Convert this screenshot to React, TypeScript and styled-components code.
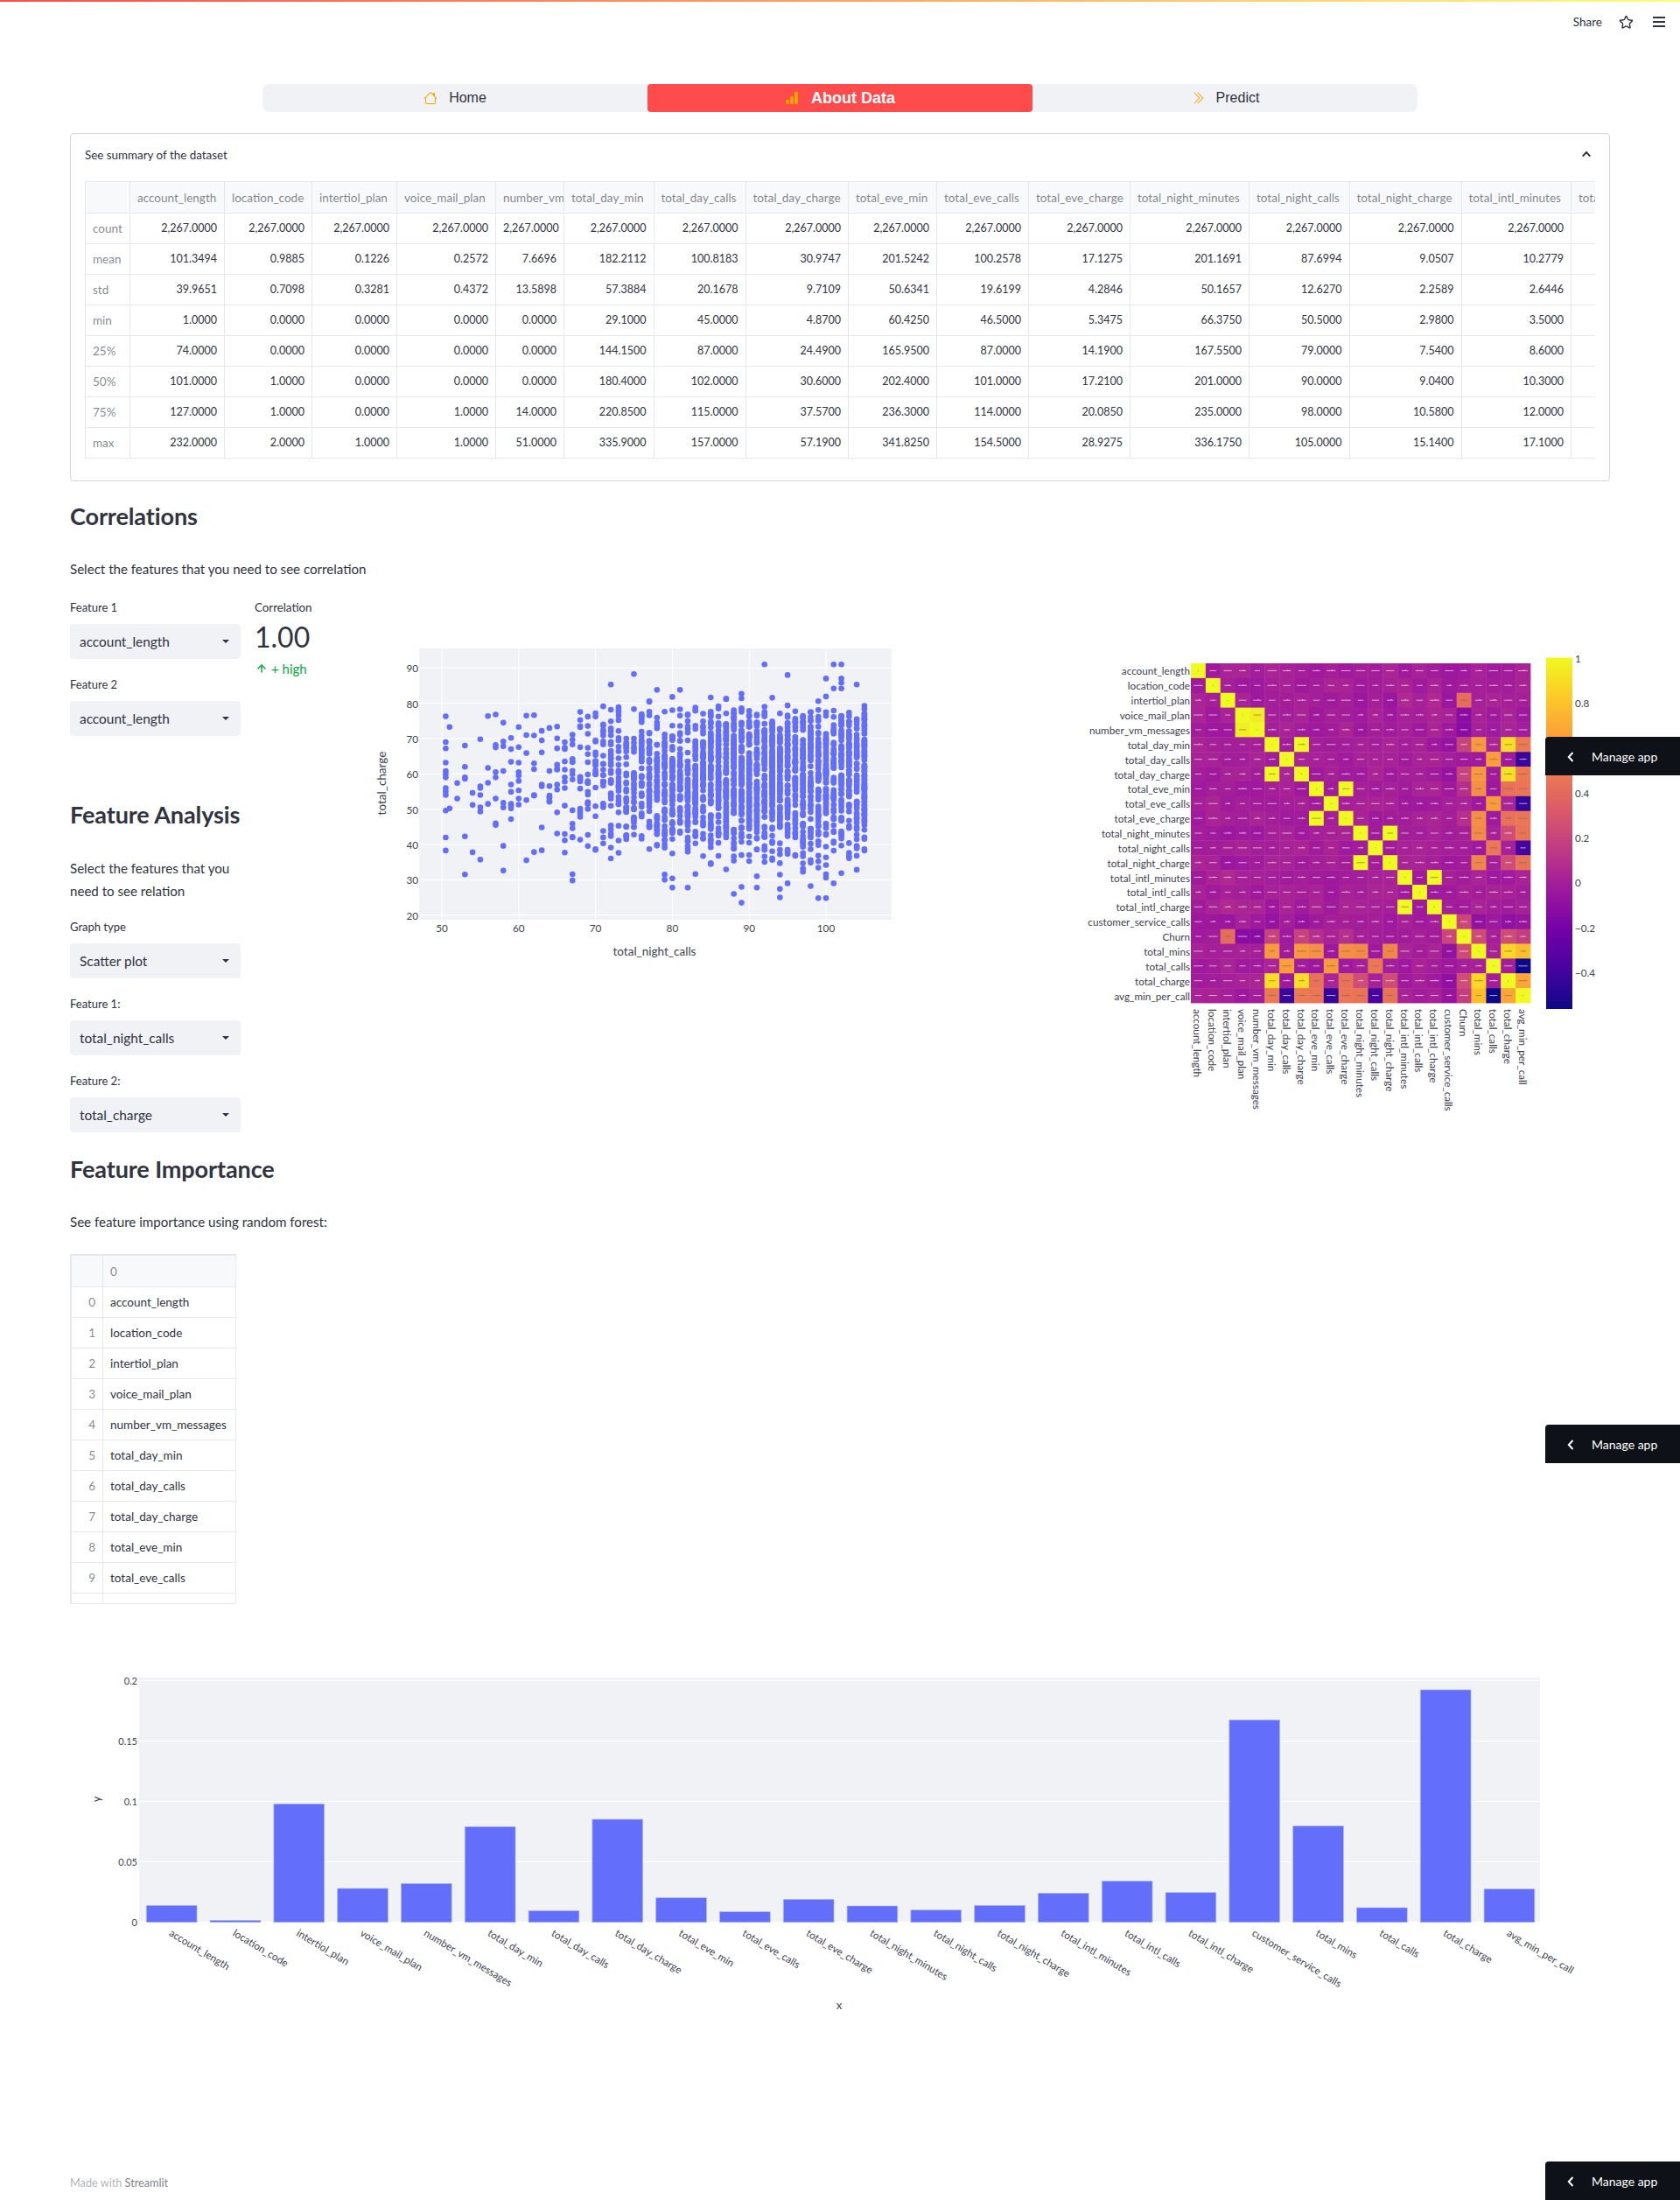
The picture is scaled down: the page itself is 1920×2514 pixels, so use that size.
import React from "react";
import styled, { createGlobalStyle } from "styled-components";
import { BsHouse, BsBarChartFill, BsChevronDoubleRight } from "react-icons/bs";
import { ArrowUp, Star } from "lucide-react";

const GlobalStyle = createGlobalStyle`
  html, body { margin: 0; padding: 0; background: #fff; }
  body { font-family: Lato, "Noto Sans", sans-serif; color: #31333f; }
  * { box-sizing: border-box; }
`;

const Page = styled.div`
  position: relative;
  width: 1920px;
  height: 2514px;
  overflow: hidden;
  background: #fff;
`;
const Decoration = styled.div`
  height: 2px;
  background: linear-gradient(90deg, #ff4b4b, #fffd80);
`;
const Header = styled.header`
  height: 46px;
  display: flex;
  align-items: center;
  justify-content: flex-end;
  padding-right: 15px;
`;
const ShareLabel = styled.span`
  font-size: 13.5px;
  margin-right: 19px;
`;
const StarButton = styled.span`
  display: flex;
  margin-right: 20px;
  color: #31333f;
`;
const Main = styled.main`
  padding: 0 80px;
`;
const Nav = styled.nav`
  display: flex;
  width: 1320px;
  height: 32px;
  margin: 48px 0 0 220px;
  background: #f0f2f6;
  border-radius: 8px;
`;
const NavItem = styled.div<{ $active?: boolean }>`
  flex: 1;
  display: flex;
  align-items: center;
  justify-content: center;
  gap: ${(p) => (p.$active ? 14 : 13)}px;
  border-radius: 4px;
  font-family: "Liberation Sans", Arial, sans-serif;
  font-size: ${(p) => (p.$active ? 18 : 16)}px;
  font-weight: ${(p) => (p.$active ? 700 : 400)};
  background: ${(p) => (p.$active ? "#ff4b4b" : "transparent")};
  color: ${(p) => (p.$active ? "#fff" : "#31333f")};
  svg { color: #ffa500; }
`;
const Expander = styled.section`
  margin-top: 24px;
  border: 1px solid #d6d6d9;
  border-radius: 4px;
  padding-bottom: 25px;
`;
const ExpanderHeader = styled.div`
  height: 54px;
  display: flex;
  justify-content: space-between;
  padding: 14px 21px 0 16px;
  line-height: 20px;
  font-size: 13.4px;
  svg { margin-top: -1px; }
`;
const TableClip = styled.div`
  width: 1726px;
  margin-left: 16px;
  overflow: hidden;
`;
const DataTable = styled.table<{ $w: number }>`
  table-layout: fixed;
  width: ${(p) => p.$w}px;
  border-collapse: collapse;
  font-size: 12.5px;
`;
const Col = styled.col<{ $w: number }>`
  width: ${(p) => p.$w}px;
`;
const HeadCell = styled.th`
  height: 36px;
  padding: 0 8px;
  border: 1px solid #e6e8ec;
  background: #f8f9fb;
  color: rgba(49, 51, 63, 0.6);
  font-size: 13.5px;
  font-weight: 400;
  text-align: left;
  white-space: nowrap;
  overflow: hidden;
`;
const IndexCell = styled.th<{ $align?: string }>`
  height: 35px;
  padding: 0 8px 1px;
  border: 1px solid #e6e8ec;
  color: rgba(49, 51, 63, 0.6);
  font-size: 13.5px;
  font-weight: 400;
  text-align: ${(p) => p.$align || "left"};
`;
const ValueCell = styled.td`
  height: 35px;
  padding: 0 8px 1px;
  border: 1px solid #e6e8ec;
  text-align: right;
  white-space: nowrap;
  overflow: hidden;
`;
const LabelCell = styled(ValueCell)`
  font-size: 13.5px;
  text-align: left;
`;
const SectionTitle = styled.h2<{ $top: number }>`
  margin: ${(p) => p.$top}px 0 0;
  height: 40px;
  line-height: 40px;
  font-size: 27px;
  font-weight: 700;
  letter-spacing: -0.1px;
`;
const Paragraph = styled.p<{ $top: number; $w?: number }>`
  margin: ${(p) => p.$top}px 0 0;
  width: ${(p) => (p.$w ? p.$w + "px" : "auto")};
  font-size: 15.1px;
  line-height: 26px;
`;
const AnalysisRow = styled.div`
  display: flex;
  align-items: flex-start;
  margin-top: 20px;
`;
const LeftColumn = styled.div`
  width: 340px;
  flex: none;
`;
const FieldsAndMetric = styled.div`
  display: flex;
  gap: 16px;
`;
const FieldStack = styled.div<{ $top?: number }>`
  width: 195px;
  margin-top: ${(p) => p.$top || 0}px;
  display: flex;
  flex-direction: column;
  gap: 18px;
`;
const Field = styled.div``;
const FieldLabel = styled.div`
  height: 30px;
  line-height: 23px;
  font-size: 13px;
`;
const Select = styled.div`
  height: 40px;
  display: flex;
  align-items: center;
  justify-content: space-between;
  padding: 0 13px 0 11px;
  background: #f0f2f6;
  border-radius: 4px;
  font-size: 15.4px;
`;
const Caret = styled.span`
  width: 0;
  height: 0;
  border-left: 4px solid transparent;
  border-right: 4px solid transparent;
  border-top: 4.5px solid #31333f;
`;
const Metric = styled.div``;
const MetricLabel = styled.div`
  height: 23px;
  line-height: 23px;
  font-size: 13.3px;
`;
const MetricValue = styled.div`
  height: 46px;
  margin-top: -1px;
  line-height: 46px;
  font-size: 32px;
`;
const MetricDelta = styled.div`
  display: flex;
  align-items: center;
  gap: 4px;
  height: 26px;
  font-size: 15px;
  color: #09ab3b;
  svg { margin-left: 1px; }
`;
const ScatterSvg = styled.svg`
  flex: none;
  display: block;
  margin-top: 37px;
  width: 620px;
  height: 400px;
`;
const HeatmapSvg = styled.svg`
  flex: none;
  display: block;
  margin: 57px 0 0 180px;
  width: 620px;
  height: 550px;
`;
const ChartText = styled.text<{ $size?: number }>`
  font-family: Lato, "Noto Sans", sans-serif;
  font-size: ${(p) => p.$size || 11.7}px;
  fill: #3f4150;
`;
const SmallTableClip = styled.div`
  width: 190px;
  height: 400px;
  margin-top: 24px;
  overflow: hidden;
  border: 1px solid #e6e8ec;
`;
const BarSvg = styled.svg`
  display: block;
  margin-top: 66px;
  width: 1760px;
  height: 440px;
`;
const Footer = styled.footer`
  margin-top: 146px;
  height: 18px;
  line-height: 18px;
  font-size: 12.7px;
  color: rgba(49, 51, 63, 0.4);
`;
const FooterBrand = styled.span`
  color: rgba(49, 51, 63, 0.65);
`;
const ManageApp = styled.div<{ $top: number }>`
  position: absolute;
  right: 0;
  top: ${(p) => p.$top}px;
  width: 154px;
  height: 44px;
  display: flex;
  align-items: center;
  padding: 1px 0 0 25px;
  gap: 20px;
  background: #0e1117;
  border-top-left-radius: 4px;
  color: #fff;
  font-size: 14px;
`;

const FEATS = [
  "account_length", "location_code", "intertiol_plan", "voice_mail_plan", "number_vm_messages",
  "total_day_min", "total_day_calls", "total_day_charge", "total_eve_min", "total_eve_calls",
  "total_eve_charge", "total_night_minutes", "total_night_calls", "total_night_charge",
  "total_intl_minutes", "total_intl_calls", "total_intl_charge", "customer_service_calls",
];
const HEAT_LABELS = [...FEATS, "Churn", "total_mins", "total_calls", "total_charge", "avg_min_per_call"];
const BAR_LABELS = [...FEATS, "total_mins", "total_calls", "total_charge", "avg_min_per_call"];
const BAR_HEIGHTS = [19.3, 2.3, 135.3, 38.7, 44.3, 109.3, 13.3, 117.7, 28, 12, 26.3, 18.7, 14, 19.3, 33.3, 47, 34, 231.3, 110, 16.7, 265.7, 38];

const EDGES = [148, 256, 356, 453, 566, 644, 746.5, 851.5, 969, 1070, 1175, 1291, 1427, 1541.5, 1669.5, 1795];
const COLS = [51, ...EDGES.slice(1).map((e, i) => e - EDGES[i]), 110];
const SUMMARY_HEAD = [
  "account_length", "location_code", "intertiol_plan", "voice_mail_plan", "number_vm_messages",
  "total_day_min", "total_day_calls", "total_day_charge", "total_eve_min", "total_eve_calls",
  "total_eve_charge", "total_night_minutes", "total_night_calls", "total_night_charge",
  "total_intl_minutes", "total_intl_calls",
];
const C = "2,267.0000";
const SUMMARY: [string, string[]][] = [
  ["count", [C, C, C, C, C, C, C, C, C, C, C, C, C, C, C]],
  ["mean", ["101.3494", "0.9885", "0.1226", "0.2572", "7.6696", "182.2112", "100.8183", "30.9747", "201.5242", "100.2578", "17.1275", "201.1691", "87.6994", "9.0507", "10.2779"]],
  ["std", ["39.9651", "0.7098", "0.3281", "0.4372", "13.5898", "57.3884", "20.1678", "9.7109", "50.6341", "19.6199", "4.2846", "50.1657", "12.6270", "2.2589", "2.6446"]],
  ["min", ["1.0000", "0.0000", "0.0000", "0.0000", "0.0000", "29.1000", "45.0000", "4.8700", "60.4250", "46.5000", "5.3475", "66.3750", "50.5000", "2.9800", "3.5000"]],
  ["25%", ["74.0000", "0.0000", "0.0000", "0.0000", "0.0000", "144.1500", "87.0000", "24.4900", "165.9500", "87.0000", "14.1900", "167.5500", "79.0000", "7.5400", "8.6000"]],
  ["50%", ["101.0000", "1.0000", "0.0000", "0.0000", "0.0000", "180.4000", "102.0000", "30.6000", "202.4000", "101.0000", "17.2100", "201.0000", "90.0000", "9.0400", "10.3000"]],
  ["75%", ["127.0000", "1.0000", "0.0000", "1.0000", "14.0000", "220.8500", "115.0000", "37.5700", "236.3000", "114.0000", "20.0850", "235.0000", "98.0000", "10.5800", "12.0000"]],
  ["max", ["232.0000", "2.0000", "1.0000", "1.0000", "51.0000", "335.9000", "157.0000", "57.1900", "341.8250", "154.5000", "28.9275", "336.1750", "105.0000", "15.1400", "17.1000"]],
];

function rng(seed: number) {
  let s = seed;
  return () => {
    s = (s * 1664525 + 1013904223) % 4294967296;
    return s / 4294967296;
  };
}

const sx = (v: number) => 505 + (v - 50) * 8.78;
const sy = (v: number) => 1045.7 - (v - 20) * 4.034;

const FIXED_LOW: [number, number[]][] = [
  [50.5, [76.3, 69, 67.2, 63.2, 60.8, 60, 59, 56, 55, 54, 49.6, 42, 38.3]],
  [51, [73.3, 50.2]], [52, [57.4, 53]], [53, [68, 62, 59, 58.6, 42.3, 31.5]], [54, [54.6, 51.2, 37.8]],
  [55, [69.8, 56.5, 56, 54, 50.5, 49.3, 35.7]], [56, [76.4, 61.7, 57.5, 51.5]],
  [57, [76.8, 68.2, 67.5, 60.5, 59, 53, 46, 45.5]], [58, [74.5, 69.2, 67.8, 60.8, 51.8, 50.5, 39.6, 32.6]],
  [59, [70.2, 67, 63.4, 57, 54.9, 51.5, 51, 50.2, 47.2]], [60, [73.3, 67.6, 63.2, 60.5, 59.5, 58, 55.3, 53, 51.3]],
];
const OUTLIERS: [number, number][] = [
  [75, 88.3], [72, 85.3], [92, 91], [95, 88], [101, 91], [102, 91], [100, 87], [102, 87], [102, 85.8], [104, 85.3],
  [101, 84.2], [102, 84.2], [78, 83.8], [81, 83.8], [89, 82.7], [89, 23.5], [99, 24.8], [100, 24.8], [94, 25], [88, 26],
  [67, 29.8], [82, 27.8], [80, 27.8], [91, 27.8], [89, 28], [94, 27.4], [95, 29], [98, 28.2], [101, 29], [79, 30], [80, 30.4],
];

function scatterPoints(): [number, number][] {
  const r = rng(42);
  const pts: [number, number][] = [];
  FIXED_LOW.forEach(([x, ys]) => ys.forEach((y) => pts.push([x, y])));
  OUTLIERS.forEach((p) => pts.push(p));
  const normal = () => {
    const u = Math.max(r(), 1e-6);
    return Math.sqrt(-2 * Math.log(u)) * Math.cos(6.28318 * r());
  };
  for (let x = 61; x <= 105; x++) {
    let n = 90 * Math.exp(-((x - 92) ** 2) / (2 * 13 ** 2));
    n = n * (0.85 + r() * 0.3);
    if (x === 105) n = 110;
    for (let i = 0; i < n; i++) {
      const y = 59.5 + normal() * 12.3;
      if (y < 30.5 || y > 82) continue;
      if (y > 78.5 && r() > 0.3) continue;
      if (y < 38 && r() > 0.55) continue;
      pts.push([x, y]);
    }
  }
  return pts;
}
const SCATTER = scatterPoints();

function heatMatrix(): number[][] {
  const r = rng(7);
  const n = 23;
  const m: number[][] = Array.from({ length: n }, () => new Array(n).fill(0));
  for (let i = 0; i < n; i++) {
    for (let j = 0; j <= i; j++) {
      const v = i === j ? 1 : (r() - 0.5) * 0.07;
      m[i][j] = v;
      m[j][i] = v;
    }
  }
  const set = (a: number, b: number, v: number) => {
    m[a][b] = v;
    m[b][a] = v;
  };
  set(3, 4, 0.96);
  set(5, 7, 1); set(8, 10, 1); set(11, 13, 1); set(14, 16, 1);
  set(2, 18, 0.42); set(3, 18, -0.12); set(4, 18, -0.12); set(5, 18, 0.2); set(7, 18, 0.2);
  set(8, 18, 0.09); set(10, 18, 0.09); set(17, 18, 0.22); set(2, 14, 0.06); set(2, 16, 0.06); set(1, 18, -0.01);
  set(2, 11, -0.04); set(2, 13, -0.05); set(17, 5, -0.07); set(17, 7, -0.07); set(17, 2, -0.05);
  set(19, 5, 0.62); set(19, 7, 0.62); set(19, 8, 0.58); set(19, 10, 0.58); set(19, 11, 0.56); set(19, 13, 0.54);
  set(19, 17, -0.08); set(19, 18, 0.24);
  set(20, 6, 0.65); set(20, 9, 0.63); set(20, 12, 0.47);
  set(21, 5, 0.9); set(21, 7, 0.9); set(21, 8, 0.44); set(21, 10, 0.44); set(21, 11, 0.25); set(21, 13, 0.25);
  set(21, 17, -0.09); set(21, 18, 0.25); set(21, 19, 0.87); set(21, 20, 0);
  set(22, 5, 0.48); set(22, 6, -0.42); set(22, 7, 0.48); set(22, 8, 0.46); set(22, 9, -0.44); set(22, 10, 0.46);
  set(22, 11, 0.45); set(22, 12, -0.38); set(22, 13, 0.45); set(22, 17, -0.06); set(22, 18, 0.17);
  set(22, 19, 0.78); set(22, 20, -0.56); set(22, 21, 0.68);
  return m;
}
const HEAT = heatMatrix();

const PLASMA = ["#0d0887", "#46039f", "#7201a8", "#9c179e", "#bd3786", "#d8576b", "#ed7953", "#fb9f3a", "#fdca26", "#f0f921"];
function plasma(v: number) {
  const t = Math.min(1, Math.max(0, (v + 0.56) / 1.56)) * (PLASMA.length - 1);
  const i = Math.min(PLASMA.length - 2, Math.floor(t));
  const f = t - i;
  const hex = (s: string, k: number) => parseInt(s.slice(1 + k * 2, 3 + k * 2), 16);
  const c = [0, 1, 2].map((k) => Math.round(hex(PLASMA[i], k) * (1 - f) + hex(PLASMA[i + 1], k) * f));
  return `rgb(${c[0]},${c[1]},${c[2]})`;
}

const HX0 = 1361, HY0 = 758, HCW = 388 / 23, HCH = 388 / 23;

function CaretSelect({ label, value }: { label: string; value: string }) {
  return (
    <Field>
      <FieldLabel>{label}</FieldLabel>
      <Select>
        {value}
        <Caret />
      </Select>
    </Field>
  );
}

function ScatterChart() {
  return (
    <ScatterSvg viewBox="420 720 620 400">
      <rect x={479} y={741} width={540} height={310} fill="#f0f2f6" />
      {[50, 60, 70, 80, 90, 100].map((v) => (
        <line key={v} x1={sx(v)} x2={sx(v)} y1={741} y2={1051} stroke="#fff" strokeWidth={1} />
      ))}
      {[20, 30, 40, 50, 60, 70, 80, 90].map((v) => (
        <line key={v} x1={479} x2={1019} y1={sy(v)} y2={sy(v)} stroke="#fff" strokeWidth={1} />
      ))}
      {SCATTER.map(([x, y], i) => (
        <circle key={i} cx={sx(x)} cy={sy(y)} r={3.3} fill="#636efa" />
      ))}
      {[50, 60, 70, 80, 90, 100].map((v) => (
        <ChartText key={v} x={sx(v)} y={1060} textAnchor="middle" dominantBaseline="central">{v}</ChartText>
      ))}
      {[20, 30, 40, 50, 60, 70, 80, 90].map((v) => (
        <ChartText key={v} x={478} y={sy(v)} textAnchor="end" dominantBaseline="central">{v}</ChartText>
      ))}
      <ChartText $size={13.5} x={748} y={1087} textAnchor="middle" dominantBaseline="central">total_night_calls</ChartText>
      <ChartText $size={13.5} x={436} y={895} textAnchor="middle" dominantBaseline="central" transform="rotate(-90 436 895)">total_charge</ChartText>
    </ScatterSvg>
  );
}

function HeatmapChart() {
  const r = rng(99);
  return (
    <HeatmapSvg viewBox="1220 740 620 550">
      <defs>
        <linearGradient id="plasmaBar" x1="0" y1="1" x2="0" y2="0">
          {PLASMA.map((c, i) => (
            <stop key={c} offset={i / (PLASMA.length - 1)} stopColor={c} />
          ))}
        </linearGradient>
      </defs>
      {HEAT.map((row, i) =>
        row.map((v, j) => (
          <rect key={`${i}-${j}`} x={HX0 + j * HCW} y={HY0 + i * HCH} width={HCW + 0.4} height={HCH + 0.4} fill={plasma(v)} />
        ))
      )}
      {HEAT.map((row, i) =>
        row.map((v, j) => {
          const cx = HX0 + (j + 0.5) * HCW;
          const cy = HY0 + (i + 0.5) * HCH;
          if (i === j) return <circle key={`a${i}-${j}`} cx={cx} cy={cy} r={0.5} fill="#8a8a50" />;
          const len = 3 + r() * 2.5;
          const tick = r() > 0.5;
          const stroke = v > 0.4 ? "#7a6a50" : "#fff";
          return (
            <g key={`a${i}-${j}`} stroke={stroke} strokeWidth={0.7} strokeOpacity={0.9}>
              <line x1={cx - len} x2={cx + len} y1={cy} y2={cy} />
              {tick && <line x1={cx + 1} x2={cx + 1} y1={cy - 1.2} y2={cy} />}
            </g>
          );
        })
      )}
      {HEAT_LABELS.map((l, i) => (
        <ChartText key={l} x={1360} y={HY0 + (i + 0.5) * HCH} textAnchor="end" dominantBaseline="central">{l}</ChartText>
      ))}
      {HEAT_LABELS.map((l, i) => {
        const x = HX0 + (i + 0.5) * HCW;
        return (
          <ChartText key={l} x={x} y={1153} dominantBaseline="central" transform={`rotate(90 ${x} 1153)`}>{l}</ChartText>
        );
      })}
      <rect x={1767} y={751.5} width={30} height={401.5} fill="url(#plasmaBar)" />
      {([["1", 751.5], ["0.8", 803], ["0.6", 854.5], ["0.4", 906], ["0.2", 957], ["0", 1008], ["\u22120.2", 1060], ["\u22120.4", 1111]] as [string, number][]).map(([t, y]) => (
        <ChartText key={t} x={1800} y={y} dominantBaseline="central">{t}</ChartText>
      ))}
    </HeatmapSvg>
  );
}

function BarChart() {
  const y0 = 2197.7;
  const step = 72.8;
  return (
    <BarSvg viewBox="80 1900 1760 440">
      <rect x={159} y={1918} width={1601} height={280} fill="#f0f2f6" />
      {[0.05, 0.1, 0.15, 0.2].map((v) => (
        <line key={v} x1={159} x2={1760} y1={y0 - v * 1382.6} y2={y0 - v * 1382.6} stroke="#fff" strokeWidth={1} />
      ))}
      <line x1={159} x2={1760} y1={y0} y2={y0} stroke="#fff" strokeWidth={2} />
      {BAR_HEIGHTS.map((h, i) => (
        <rect key={i} x={167.3 + i * step} y={y0 - h} width={57.7} height={h} fill="#636efa" stroke="#b0b6f5" strokeWidth={0.7} />
      ))}
      {(["0", "0.05", "0.1", "0.15", "0.2"] as string[]).map((t) => (
        <ChartText key={t} $size={11} x={157} y={y0 - Number(t) * 1382.6} textAnchor="end" dominantBaseline="central">{t}</ChartText>
      ))}
      {BAR_LABELS.map((l, i) => {
        const x = 195 + i * step;
        return (
          <ChartText key={l} x={x} y={2208} dominantBaseline="central" transform={`rotate(31 ${x} 2208)`}>{l}</ChartText>
        );
      })}
      <ChartText $size={13} x={959} y={2292} textAnchor="middle" dominantBaseline="central">x</ChartText>
      <ChartText $size={13} x={110} y={2057} textAnchor="middle" dominantBaseline="central" transform="rotate(-90 110 2057)">y</ChartText>
    </BarSvg>
  );
}

export default function App() {
  const tableWidth = COLS.reduce((a, b) => a + b, 0);
  return (
    <Page>
      <GlobalStyle />
      <Decoration />
      <Header>
        <ShareLabel>Share</ShareLabel>
        <StarButton><Star size={17} strokeWidth={2} /></StarButton>
        <svg width="18" height="14" viewBox="0 0 18 14" aria-hidden="true">
          <path d="M2 2h14M2 7h14M2 12h14" stroke="#31333f" strokeWidth="2" />
        </svg>
      </Header>
      <Main>
        <Nav>
          <NavItem><BsHouse size={16} />Home</NavItem>
          <NavItem $active><BsBarChartFill size={16} />About Data</NavItem>
          <NavItem><BsChevronDoubleRight size={16} />Predict</NavItem>
        </Nav>
        <Expander>
          <ExpanderHeader>
            See summary of the dataset
            <svg width="10" height="20" viewBox="0 0 10 20" aria-hidden="true">
              <path d="M0.7 12.6 5 8l4.3 4.6" fill="none" stroke="#31333f" strokeWidth="2" />
            </svg>
          </ExpanderHeader>
          <TableClip>
            <DataTable $w={tableWidth}>
              <colgroup>
                {COLS.map((w, i) => <Col key={i} $w={w} />)}
              </colgroup>
              <thead>
                <tr>
                  <HeadCell />
                  {SUMMARY_HEAD.map((h) => <HeadCell key={h}>{h}</HeadCell>)}
                </tr>
              </thead>
              <tbody>
                {SUMMARY.map(([name, vals]) => (
                  <tr key={name}>
                    <IndexCell>{name}</IndexCell>
                    {vals.map((v, i) => <ValueCell key={i}>{v}</ValueCell>)}
                    <ValueCell />
                  </tr>
                ))}
              </tbody>
            </DataTable>
          </TableClip>
        </Expander>

        <SectionTitle $top={20}>Correlations</SectionTitle>
        <Paragraph $top={27}>Select the features that you need to see correlation</Paragraph>
        <AnalysisRow>
          <LeftColumn>
            <FieldsAndMetric>
              <FieldStack>
                <CaretSelect label="Feature 1" value="account_length" />
                <CaretSelect label="Feature 2" value="account_length" />
              </FieldStack>
              <Metric>
                <MetricLabel>Correlation</MetricLabel>
                <MetricValue>1.00</MetricValue>
                <MetricDelta><ArrowUp size={14} strokeWidth={2.5} />+ high</MetricDelta>
              </Metric>
            </FieldsAndMetric>
            <SectionTitle $top={70}>Feature Analysis</SectionTitle>
            <Paragraph $top={28} $w={195}>Select the features that you need to see relation</Paragraph>
            <FieldStack $top={17}>
              <CaretSelect label="Graph type" value="Scatter plot" />
              <CaretSelect label="Feature 1:" value="total_night_calls" />
              <CaretSelect label="Feature 2:" value="total_charge" />
            </FieldStack>
          </LeftColumn>
          <ScatterChart />
          <HeatmapChart />
        </AnalysisRow>

        <SectionTitle $top={22}>Feature Importance</SectionTitle>
        <Paragraph $top={27}>See feature importance using random forest:</Paragraph>
        <SmallTableClip>
          <DataTable $w={190}>
            <colgroup>
              <Col $w={36} />
              <Col $w={154} />
            </colgroup>
            <thead>
              <tr>
                <HeadCell />
                <HeadCell>0</HeadCell>
              </tr>
            </thead>
            <tbody>
              {HEAT_LABELS.slice(0, 11).map((l, i) => (
                <tr key={l}>
                  <IndexCell $align="right">{i}</IndexCell>
                  <LabelCell>{l}</LabelCell>
                </tr>
              ))}
            </tbody>
          </DataTable>
        </SmallTableClip>
        <BarChart />
        <Footer>Made with <FooterBrand>Streamlit</FooterBrand></Footer>
      </Main>
      {[842, 1628, 2470].map((t) => (
        <ManageApp key={t} $top={t}>
          <svg width="8" height="12" viewBox="0 0 8 12" aria-hidden="true">
            <path d="M6.5 1 1.8 6l4.7 5" fill="none" stroke="#fff" strokeWidth="2" />
          </svg>
          Manage app
        </ManageApp>
      ))}
    </Page>
  );
}
